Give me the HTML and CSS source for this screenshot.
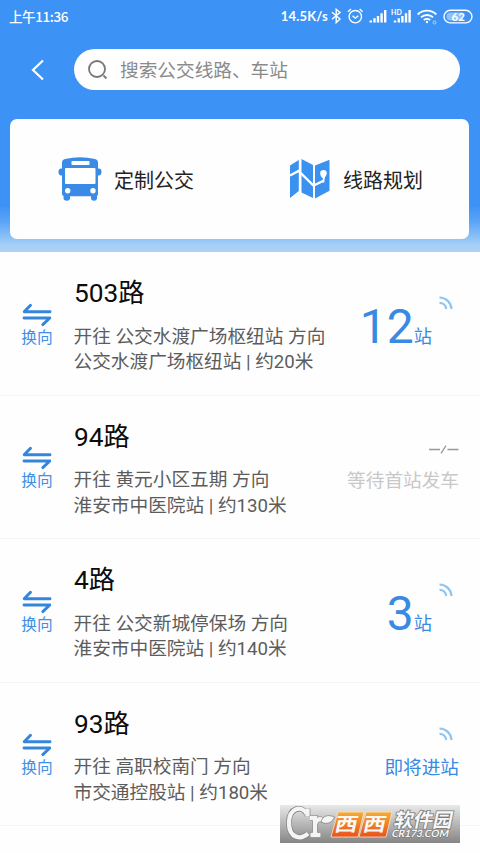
FILE: index.html
```html
<!DOCTYPE html>
<html lang="zh-CN">
<head>
<meta charset="utf-8">
<title>公交</title>
<link rel="stylesheet" href="styles.css">
</head>
<body>
<svg class="defs" width="0" height="0" aria-hidden="true">
  <symbol id="swap" viewBox="0 0 30 24"><path d="M8.500 2.200 2.200 8.800H28M2 15h25.800l-7 6.600" fill="none" stroke="#3485dc" stroke-width="2.900" stroke-linecap="round" stroke-linejoin="round"/></symbol>
  <symbol id="live" viewBox="0 0 14 14"><path d="M.5 1.500A12 12 0 0 1 12.500 13M.5 6.800A7 7 0 0 1 7.300 13" fill="none" stroke="#8fc5f1" stroke-width="2.200"/></symbol>
</svg>
<header class="header">
  <div class="status">
    <span class="time">上午11:36</span>
    <span class="speed">14.5K/s</span>
    <svg class="status-icons" width="138" height="20" viewBox="0 0 138 20" fill="none" stroke="#fff" stroke-width="1.400">
      <path d="M-3 6.200 5 13 1.200 16.700V3.200L5 6.400-3 13.200"/>
      <circle cx="20.300" cy="10.700" r="6.200"/>
      <path d="m17.500 9.700 2.800 2.500 3-2.500M13 5.700l3-2.800M27.600 5.700l-3-2.800"/>
      <g stroke-width="2.400"><path d="M35.800 16.500v-2M39.500 16.500v-4.200M43 16.500V10M46.600 16.500V7.200M50.200 16.500V4"/><path d="M60 16.500v-2M63.800 16.500v-4.200M67.400 16.500V10M71 16.500V7.200M74.600 16.500V4"/></g>
      <text class="hd" x="56" y="8.500">HD</text>
      <g stroke-width="1.900"><path d="M82.700 8.500a13 13 0 0 1 18.600 0M86 11.300a9 9 0 0 1 12 0M88.800 14a5 5 0 0 1 6.400 0"/></g>
      <circle cx="92" cy="16" r="1.200" fill="#fff" stroke="none"/>
      <circle cx="99.500" cy="16.500" r="1.500" stroke="#b9d9fc" stroke-width="1"/>
      <rect x="109" y="4.300" width="28" height="12.600" rx="6.300"/>
      <path d="M111.500 10.500a4 4 0 0 1 4-4H128v8h-12.500a4 4 0 0 1-4-4Z" fill="#8fc1fb" stroke="none"/>
      <text class="battery" x="116.500" y="14.800">62</text>
    </svg>
  </div>
  <div class="search-row">
    <svg class="back" width="14" height="22" viewBox="0 0 14 22"><path d="M12 1.500 2 11l10 9.500" fill="none" stroke="#fff" stroke-width="2.200"/></svg>
    <div class="search">
      <svg width="20" height="20" viewBox="0 0 20 20" fill="none" stroke="#777" stroke-width="1.800"><circle cx="9" cy="9" r="8"/><path d="m15.500 15.500 3 3"/></svg>
      <span>搜索公交线路、车站</span>
    </div>
  </div>
  <nav class="card">
    <a class="entry entry-bus">
      <svg width="44" height="44" viewBox="0 0 44 44">
        <path fill="#398be5" d="M4 5Q4.300 2.600 7 2 22 -1.400 37 2q2.700.6 3 3v6.500c2.500-.4 3.500.8 3.500 3.300s-1 4-3.500 3.700V36.500q0 2-1 2.500v2q0 2.800-3 2.800T33 41v-1.700H12V41q0 2.800-3.200 2.800T5.500 41v-2Q4 38.500 4 36.500v-18C1.500 18.800.5 17.500.5 15S1.500 11 4 11.500Z"/>
        <rect x="13.500" y="4" width="18" height="4" rx=".8" fill="#fff"/>
        <rect x="7" y="11" width="30.500" height="16" rx="1" fill="#fff"/>
        <circle cx="9.700" cy="33.800" r="2.700" fill="#fff"/><circle cx="35" cy="33.800" r="2.700" fill="#fff"/>
      </svg>
      <span>定制公交</span>
    </a>
    <a class="entry entry-map">
      <svg width="40" height="40" viewBox="0 0 40 40">
        <path fill="#3b91ef" d="M0 6.500 8.800 1v31L0 39ZM11.500 0 23 6v33l-11.500-5.500ZM25 6.500 39.500.8v31L25 39.500Z"/>
        <path d="M0 16.500 8.500 12 23.500 26.500 33 22" fill="none" stroke="#fff" stroke-width="2.400"/>
        <path d="M33.500 11a3.300 3.300 0 0 1 3.300 3.300c0 2-1.500 2.900-2 4.500l-.6 5-2.200-.5 1-4c-1.600-1-2.800-2.600-2.800-5a3.300 3.300 0 0 1 3.300-3.300Z" fill="#fff"/>
      </svg>
      <span>线路规划</span>
    </a>
  </nav>
</header>
<main class="routes">
  <article class="route">
    <div class="swap"><svg><use href="#swap"/></svg><span>换向</span></div>
    <div class="info"><h2>503路</h2><p>开往 公交水渡广场枢纽站 方向</p><p>公交水渡广场枢纽站 | 约20米</p></div>
    <div class="eta"><svg class="live"><use href="#live"/></svg><div class="stops"><b>12</b><span>站</span></div></div>
  </article>
  <article class="route">
    <div class="swap"><svg><use href="#swap"/></svg><span>换向</span></div>
    <div class="info"><h2>94路</h2><p>开往 黄元小区五期 方向</p><p>淮安市中医院站 | 约130米</p></div>
    <div class="eta waiting"><svg class="none" width="30" height="10" viewBox="0 0 30 10"><path d="M0 4.500h11M18.500 4.500h11M12 8.300l5-7.600" fill="none" stroke="#999" stroke-width="1.300"/></svg><span class="state">等待首站发车</span></div>
  </article>
  <article class="route">
    <div class="swap"><svg><use href="#swap"/></svg><span>换向</span></div>
    <div class="info"><h2>4路</h2><p>开往 公交新城停保场 方向</p><p>淮安市中医院站 | 约140米</p></div>
    <div class="eta"><svg class="live"><use href="#live"/></svg><div class="stops"><b>3</b><span>站</span></div></div>
  </article>
  <article class="route">
    <div class="swap"><svg><use href="#swap"/></svg><span>换向</span></div>
    <div class="info"><h2>93路</h2><p>开往 高职校南门 方向</p><p>市交通控股站 | 约180米</p></div>
    <div class="eta"><svg class="live"><use href="#live"/></svg><span class="state">即将进站</span></div>
  </article>
</main>
<svg class="watermark" width="180" height="38" viewBox="0 0 180 38">
  <defs>
    <linearGradient id="grey" x2="0" y2="1"><stop stop-color="#e9e9e9"/><stop offset="1" stop-color="#858585"/></linearGradient>
    <linearGradient id="orange" x2="0" y2="1"><stop stop-color="#f5ad35"/><stop offset="1" stop-color="#e9501d"/></linearGradient>
    <g id="mark"><path d="M26.500 8.500C22 .5 9 2 9 18S22 35 28 28.500"/><path d="M27.500 3.500v8M30 13h5v16M30.500 30h10M35 19q2-6.500 8-4"/></g>
  </defs>
  <path fill="url(#grey)" d="M0 0h180v38H0Z"/>
  <use href="#mark" fill="none" stroke="#777" stroke-width="5.600"/>
  <use href="#mark" fill="none" stroke="#f4f4f4" stroke-width="4.400"/>
  <path d="M41 17c1-6 7-8 13.500-5-2.500 6-7.500 8-13.500 5Z" fill="#f5f5f5" stroke="#777" stroke-width=".7"/>
  <path d="M58 7h26l-6 25H51ZM86 7h26l-6 25H79Z" fill="url(#orange)" stroke="#fbe6ca" stroke-width=".8"/>
  <g transform="skewX(-12)"><g transform="scale(1.200 1)"><text class="wm-x" x="49.500" y="26.500">西</text><text class="wm-x" x="73" y="26.500">西</text></g><text class="wm-name" x="117.500" y="21.500">软件园</text><text class="wm-url" x="118" y="32" textLength="57" lengthAdjust="spacingAndGlyphs">CR173.COM</text></g>
</svg>
</body>
</html>
```
FILE: styles.css
```css
* { box-sizing: border-box; }
body {
  margin: 0;
  width: 480px;
  height: 853px;
  overflow: hidden;
  position: relative;
  background: #fefefe;
  color: #111;
  font-family: Roboto, "Noto Sans CJK SC", sans-serif;
}
h2, p { margin: 0; font-weight: 400; white-space: nowrap; }
svg { display: block; flex: none; }
.defs { position: absolute; }
.header {
  height: 252px;
  background: linear-gradient(#3c92f5 0, #3c92f5 205px, #5ba5f7 222px, #a6cff6 245px, #abd3f7 252px);
}
.status {
  display: flex;
  align-items: center;
  height: 32px;
  padding: 0 7px 0 9px;
  color: #fff;
  font-family: Lato, "Noto Sans CJK SC", sans-serif;
  font-size: 13.5px;
}
.time { margin-top: -1px; font-family: "Noto Sans CJK SC", sans-serif; font-weight: 500; letter-spacing: -.4px; }
.speed { margin-left: auto; margin-right: 7px; font-weight: 700; font-size: 13px; letter-spacing: .2px; }
.status-icons { margin-top: -1px; overflow: visible; }
.status-icons text { fill: #fff; stroke: none; font-family: Lato, sans-serif; font-weight: 700; }
.status-icons .hd { font-size: 7px; }
.status-icons .battery { font-size: 11.5px; }
.search-row { display: flex; align-items: center; margin-top: 17px; padding-left: 31px; }
.back { margin-right: 29px; }
.search {
  display: flex;
  align-items: center;
  gap: 12px;
  width: 386px;
  height: 41px;
  padding: 0 0 1px 14px;
  border-radius: 21px;
  background: #fefefe;
  color: #8a8a8a;
  font-size: 18.67px;
}
.search svg { margin-top: 2px; }
.search span { margin-top: -1px; }
.card {
  display: flex;
  align-items: center;
  width: 459px;
  height: 120px;
  margin: 29.4px 0 0 10.4px;
  border-radius: 7px;
  background: #fefefe;
  color: #222;
  font-size: 20px;
}
.entry { display: flex; align-items: center; }
.entry svg { margin-top: -1px; }
.entry-bus { gap: 12px; width: 279.5px; padding-left: 47.5px; }
.entry-map { gap: 13px; }
.route {
  display: flex;
  height: 143.5px;
  padding-right: 21px;
  border-bottom: 1.5px solid #f4f4f4;
}
.swap {
  display: flex;
  flex-direction: column;
  align-items: center;
  width: 74px;
  padding-top: 50.5px;
  color: #408fe6;
  font-size: 15.7px;
  line-height: 22px;
}
.swap svg { width: 30px; height: 24px; }
.info { padding-top: 26px; color: #5c5c5c; font-size: 18.67px; line-height: 25.5px; }
.info h2 { margin-bottom: 16.5px; color: #0c0c0c; font-size: 26.3px; line-height: 30px; }
.info p { margin-left: -.5px; }
.eta {
  display: flex;
  flex-direction: column;
  align-items: flex-end;
  margin-left: auto;
  padding-top: 44px;
  color: #388ae2;
  font-size: 18.67px;
}
.live { width: 14px; height: 14px; margin-right: 6px; }
.stops { display: flex; align-items: baseline; margin: -11px 27px 0 0; line-height: 56px; }
.stops b { font-size: 48px; font-weight: 400; }
.stops span { font-size: 18.3px; }
.state { margin-top: 14px; line-height: 26px; }
.waiting { padding-top: 49px; color: #c8c8c8; }
.waiting .state { margin-top: 13px; }
.watermark { position: absolute; left: 280px; top: 805px; }
.watermark text { fill: #f8f8f8; font-family: "Noto Sans CJK SC", sans-serif; font-weight: 700; }
.watermark .wm-x { font-size: 19px; }
.watermark .wm-name { font-size: 19.5px; paint-order: stroke; stroke: #777; stroke-width: 1.6px; }
.watermark .wm-url { font-family: Lato, sans-serif; font-size: 10px; paint-order: stroke; stroke: #777; stroke-width: 1.2px; }
```
